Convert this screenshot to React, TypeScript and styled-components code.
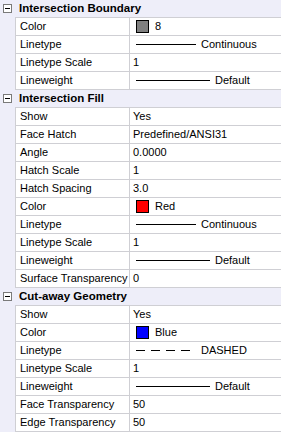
import * as React from "react";
import styled, { createGlobalStyle } from "styled-components";

const GlobalStyle = createGlobalStyle`
  html, body {
    margin: 0;
    padding: 0;
    background: #eeeef9;
  }
  body {
    font-family: "Liberation Sans", Arial, sans-serif;
    font-size: 11px;
    color: #000;
  }
`;

const Grid = styled.div`
  width: 281px;
  height: 432px;
  background: #eeeef9;
  overflow: hidden;
`;

const Header = styled.div`
  height: 17px;
  display: flex;
  align-items: center;
`;

const Toggle = styled.span`
  box-sizing: border-box;
  width: 9px;
  height: 9px;
  margin: 0 7px 0 3px;
  border: 1px solid #7a7a7a;
  background: #fff;
  display: flex;
  align-items: center;
  justify-content: center;

  &::after {
    content: "";
    width: 5px;
    height: 1px;
    background: #000;
  }
`;

const Title = styled.span`
  font-weight: bold;
  font-size: 11.5px;
  line-height: 17px;
`;

const Rows = styled.div`
  margin-left: 15px;
  border-top: 1px solid #cfcfd4;
  border-left: 1px solid #cfcfd4;
`;

const Row = styled.div`
  display: grid;
  grid-template-columns: 114px 1fr;
  height: 17px;
  border-bottom: 1px solid #cfcfd4;
  background: #fff;
`;

const Label = styled.div`
  border-right: 1px solid #cfcfd4;
  padding-left: 4px;
  line-height: 17px;
  white-space: nowrap;
`;

const Value = styled.div`
  display: flex;
  align-items: center;
  padding-left: 3px;
  line-height: 17px;
  white-space: nowrap;
`;

const Swatch = styled.span<{ fill: string }>`
  box-sizing: border-box;
  width: 13px;
  height: 13px;
  margin-left: 3px;
  margin-right: 6px;
  border: 1px solid #000;
  background: ${p => p.fill};
`;

const LineSample = styled.svg`
  display: block;
  margin-left: 3px;
  margin-right: 5px;
`;

type Cell =
  | { kind: "text"; text: string }
  | { kind: "color"; fill: string; text: string }
  | { kind: "line"; width: number; dashed?: boolean; text: string };

interface Prop {
  label: string;
  value: Cell;
}

interface Category {
  title: string;
  props: Prop[];
}

const txt = (text: string): Cell => ({ kind: "text", text });

const categories: Category[] = [
  {
    title: "Intersection Boundary",
    props: [
      { label: "Color", value: { kind: "color", fill: "#808080", text: "8" } },
      { label: "Linetype", value: { kind: "line", width: 60, text: "Continuous" } },
      { label: "Linetype Scale", value: txt("1") },
      { label: "Lineweight", value: { kind: "line", width: 74, text: "Default" } },
    ],
  },
  {
    title: "Intersection Fill",
    props: [
      { label: "Show", value: txt("Yes") },
      { label: "Face Hatch", value: txt("Predefined/ANSI31") },
      { label: "Angle", value: txt("0.0000") },
      { label: "Hatch Scale", value: txt("1") },
      { label: "Hatch Spacing", value: txt("3.0") },
      { label: "Color", value: { kind: "color", fill: "#ff0000", text: "Red" } },
      { label: "Linetype", value: { kind: "line", width: 60, text: "Continuous" } },
      { label: "Linetype Scale", value: txt("1") },
      { label: "Lineweight", value: { kind: "line", width: 74, text: "Default" } },
      { label: "Surface Transparency", value: txt("0") },
    ],
  },
  {
    title: "Cut-away Geometry",
    props: [
      { label: "Show", value: txt("Yes") },
      { label: "Color", value: { kind: "color", fill: "#0000ff", text: "Blue" } },
      { label: "Linetype", value: { kind: "line", width: 60, dashed: true, text: "DASHED" } },
      { label: "Linetype Scale", value: txt("1") },
      { label: "Lineweight", value: { kind: "line", width: 74, text: "Default" } },
      { label: "Face Transparency", value: txt("50") },
      { label: "Edge Transparency", value: txt("50") },
    ],
  },
];

const ValueCell = ({ cell }: { cell: Cell }) => {
  if (cell.kind === "color") {
    return (
      <Value>
        <Swatch fill={cell.fill} />
        {cell.text}
      </Value>
    );
  }
  if (cell.kind === "line") {
    return (
      <Value>
        <LineSample width={cell.width} height={17}>
          <line
            x1={0}
            y1={8.5}
            x2={cell.width}
            y2={8.5}
            stroke="#000"
            strokeWidth={1}
            strokeDasharray={cell.dashed ? "9 6" : undefined}
          />
        </LineSample>
        {cell.text}
      </Value>
    );
  }
  return <Value>{cell.text}</Value>;
};

const App = () => {
  return (
    <>
      <GlobalStyle />
      <Grid>
        {categories.map(cat => (
          <section key={cat.title}>
            <Header>
              <Toggle />
              <Title>{cat.title}</Title>
            </Header>
            <Rows>
              {cat.props.map(p => (
                <Row key={p.label}>
                  <Label>{p.label}</Label>
                  <ValueCell cell={p.value} />
                </Row>
              ))}
            </Rows>
          </section>
        ))}
      </Grid>
    </>
  );
};

export default App;
